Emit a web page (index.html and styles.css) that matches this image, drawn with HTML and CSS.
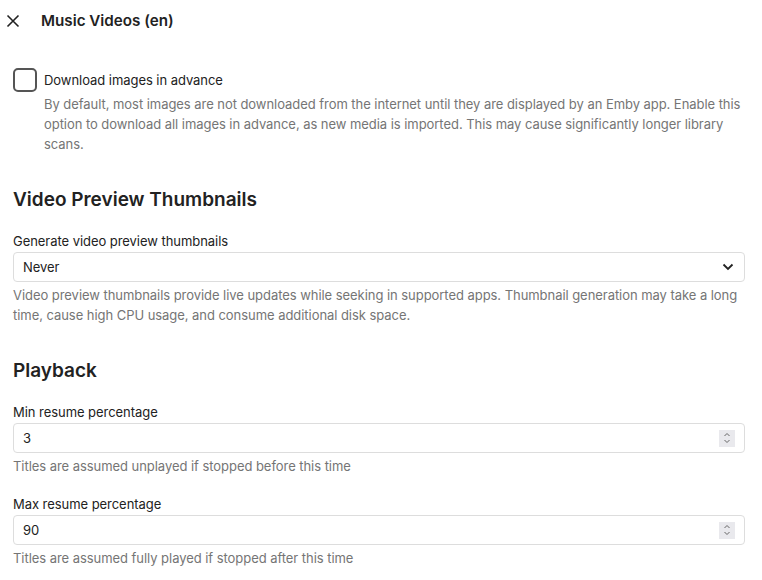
FILE: index.html
```html
<!DOCTYPE html>
<html>
<head>
<meta charset="utf-8">
<link rel="stylesheet" href="styles.css">
</head>
<body>
<header class="top">
  <span class="close"><svg width="14" height="14" viewBox="0 0 14 14"><path d="M1.5 1.5 L12.5 12.5 M12.5 1.5 L1.5 12.5" stroke="#222" stroke-width="1.6" fill="none"/></svg></span>
  <h1 class="title">Music Videos (en)</h1>
</header>
<main class="content">
  <div class="check-row">
    <span class="checkbox"></span>
    <div class="check-text">
      <div class="check-label">Download images in advance</div>
      <div class="help">By default, most images are not downloaded from the internet until they are displayed by an Emby app. Enable this option to download all images in advance, as new media is imported. This may cause significantly longer library scans.</div>
    </div>
  </div>

  <h2 class="section">Video Preview Thumbnails</h2>
  <div class="field">
    <label class="label">Generate video preview thumbnails</label>
    <div class="box select"><span>Never</span>
      <svg class="chev" width="12" height="8" viewBox="0 0 12 8"><path d="M1.5 1.5 L6 6 L10.5 1.5" stroke="#222" stroke-width="1.8" fill="none"/></svg>
    </div>
    <div class="help">Video preview thumbnails provide live updates while seeking in supported apps. Thumbnail generation may take a long time, cause high CPU usage, and consume additional disk space.</div>
  </div>

  <h2 class="section">Playback</h2>
  <div class="field">
    <label class="label">Min resume percentage</label>
    <div class="box"><span>3</span>
      <span class="spin"><svg width="8" height="12" viewBox="0 0 8 12"><path d="M1.5 4 L4 1.5 L6.5 4 M1.5 8 L4 10.5 L6.5 8" stroke="#666" stroke-width="1" fill="none"/></svg></span>
    </div>
    <div class="help">Titles are assumed unplayed if stopped before this time</div>
  </div>
  <div class="field">
    <label class="label">Max resume percentage</label>
    <div class="box"><span>90</span>
      <span class="spin"><svg width="8" height="12" viewBox="0 0 8 12"><path d="M1.5 4 L4 1.5 L6.5 4 M1.5 8 L4 10.5 L6.5 8" stroke="#666" stroke-width="1" fill="none"/></svg></span>
    </div>
    <div class="help">Titles are assumed fully played if stopped after this time</div>
  </div>
</main>
</body>
</html>
```
FILE: styles.css
```css
* { box-sizing: border-box; }
html, body { margin: 0; padding: 0; background: #fff; }
body {
  font-family: Inter, "Noto Sans", sans-serif;
  color: #222;
  font-size: 13px;
  letter-spacing: -0.05px;
}
.top {
  display: flex;
  align-items: center;
  height: 41px;
  padding-left: 6px;
}
.close { display: flex; width: 14px; height: 14px; }
.title {
  margin: 0 0 0 21px;
  font-size: 15.2px;
  font-weight: 600;
  letter-spacing: 0;
}
.content {
  padding: 27px 17px 0 13px;
}
.check-row {
  display: flex;
  align-items: flex-start;
}
.checkbox {
  flex: none;
  width: 24px;
  height: 24px;
  border: 2px solid #555;
  border-radius: 5px;
  margin-right: 7px;
}
.check-label {
  line-height: 24px;
  font-size: 13px;
  color: #222;
}
.help {
  color: #757575;
  font-size: 13px;
  line-height: 20px;
  margin-top: 2px;
}
.box + .help { margin-top: 3px; }
.section {
  margin: 34px 0 0;
  font-size: 19px;
  font-weight: 600;
  line-height: 24px;
  color: #222;
  letter-spacing: 0;
}
.field { margin-top: 19px; }
.section + .field { margin-top: 20px; }
.label {
  display: block;
  line-height: 18px;
  margin-bottom: 2px;
}
.box {
  display: flex;
  align-items: center;
  justify-content: space-between;
  height: 30px;
  border: 1px solid #ddd;
  border-radius: 4px;
  padding: 0 9px 0 9px;
  color: #222;
}
.chev { margin-right: 1px; }
.spin {
  display: flex;
  align-items: center;
  justify-content: center;
  width: 16px;
  height: 17px;
  background: #e9e9ed;
}
```
